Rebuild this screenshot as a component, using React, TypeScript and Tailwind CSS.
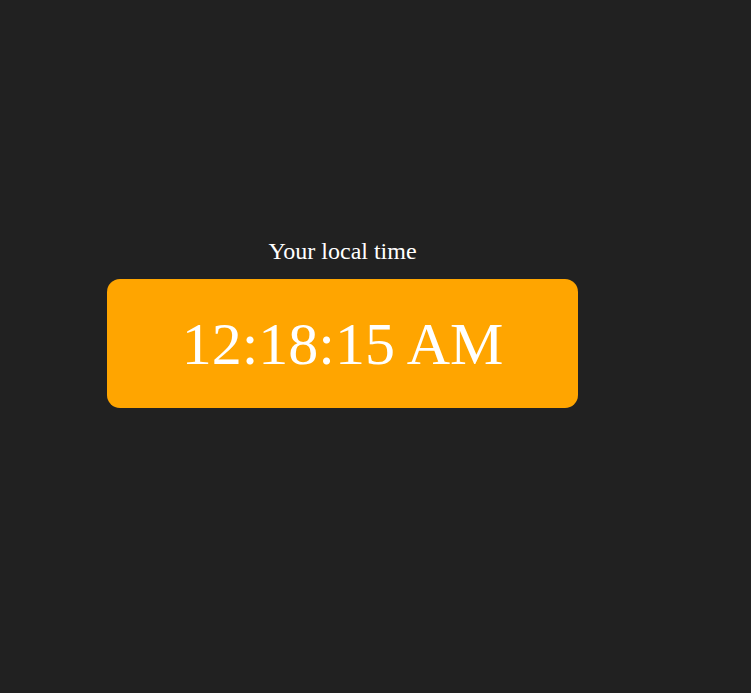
export default function App() {
  const time = '12:18:15 AM';

  return (
    <div className="min-h-screen bg-[#212121] flex flex-col pt-[237px] pl-[107px] font-['Liberation_Serif',serif] text-white">
      <div className="w-[471px] flex flex-col items-center">
        <p className="text-[24px] leading-[28px]">Your local time</p>
        <div className="mt-[14px] w-full h-[129px] rounded-[13px] bg-[#ffa500] flex items-center justify-center">
          <span className="text-[60px] leading-none">{time}</span>
        </div>
      </div>
    </div>
  );
}
